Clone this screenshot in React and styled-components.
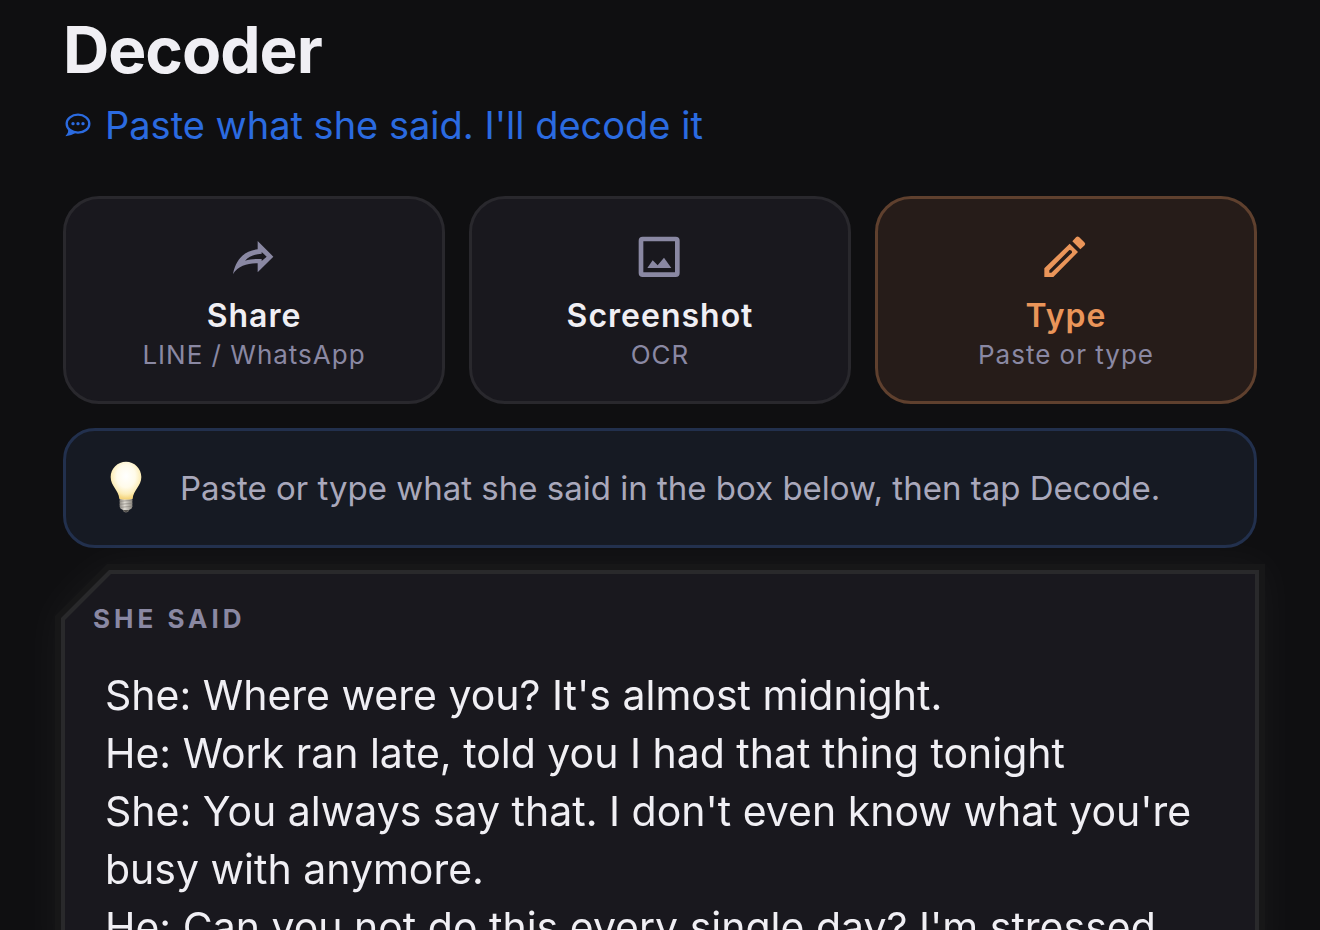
import { useState } from "react";
import styled, { createGlobalStyle } from "styled-components";

const MODES = [
  { id: "share", title: "Share", detail: "LINE / WhatsApp", Icon: ShareIcon },
  { id: "screenshot", title: "Screenshot", detail: "OCR", Icon: ImageIcon },
  { id: "type", title: "Type", detail: "Paste or type", Icon: PencilIcon },
];

const CONVERSATION = [
  "She: Where were you? It's almost midnight.",
  "He: Work ran late, told you I had that thing tonight",
  "She: You always say that. I don't even know what you're busy with anymore.",
  "He: Can you not do this every single day? I'm stressed",
].join("\n");

export default function App() {
  const [mode, setMode] = useState("type");
  const [message, setMessage] = useState(CONVERSATION);

  return (
    <>
      <GlobalStyle />
      <Page>
        <Title>Decoder</Title>
        <Subtitle>
          <ChatIcon />
          Paste what she said. I'll decode it
        </Subtitle>
        <ModeList>
          {MODES.map(({ id, title, detail, Icon }) => (
            <ModeButton
              key={id}
              type="button"
              $active={mode === id}
              aria-pressed={mode === id}
              onClick={() => setMode(id)}
            >
              <Icon />
              <ModeTitle>{title}</ModeTitle>
              <ModeDetail>{detail}</ModeDetail>
            </ModeButton>
          ))}
        </ModeList>
        <Hint>
          <BulbIcon />
          <HintText>
            Paste or type what she said in the box below, then tap Decode.
          </HintText>
        </Hint>
        <Glow>
          <Halo>
            <Frame>
              <Panel>
                <Label htmlFor="message">SHE SAID</Label>
                <Message
                  id="message"
                  spellCheck={false}
                  value={message}
                  onChange={(event) => setMessage(event.target.value)}
                />
              </Panel>
            </Frame>
          </Halo>
        </Glow>
      </Page>
    </>
  );
}

function ChatIcon() {
  return (
    <svg width="26" height="24" viewBox="0 0 78 72" aria-hidden="true">
      <ellipse
        cx="39"
        cy="32"
        rx="34"
        ry="27"
        fill="none"
        stroke="currentColor"
        strokeWidth="7"
      />
      <g fill="currentColor">
        <path d="M9 48Q12 59 2 68V70Q17 69 30 61L26 56Z" />
        <circle cx="24" cy="32" r="5" />
        <circle cx="39" cy="32" r="5" />
        <circle cx="54" cy="32" r="5" />
      </g>
    </svg>
  );
}

function ShareIcon() {
  return (
    <ModeIcon viewBox="3 0 144 144" aria-hidden="true">
      <path d="M12 123C21 76 48 54 86 49V24L133 71L86 118V91C55 91 28 99 12 123ZM48 83C63 79 78 77 98 78V84L113 71L98 57V62C78 63 60 69 48 83Z" />
    </ModeIcon>
  );
}

function ImageIcon() {
  return (
    <ModeIcon viewBox="2 0 144 144" aria-hidden="true">
      <path d="M22 11H121Q133 11 133 23V120Q133 132 121 132H22Q10 132 10 120V23Q10 11 22 11ZM24 25V118H119V25Z" />
      <path d="M36 105L52 82L67 97L86 74L108 105Z" />
    </ModeIcon>
  );
}

function PencilIcon() {
  return (
    <ModeIcon viewBox="0 0 144 144" aria-hidden="true">
      <path d="M7 106L83 32L108 57L34 132H7ZM22 112V119H28L90 59Q91 51 82 51Z" />
      <path d="M91 25L102 13Q106 8 111 12L127 28Q132 33 128 37L115 49Z" />
    </ModeIcon>
  );
}

function BulbIcon() {
  return (
    <Bulb viewBox="0 0 96 156" aria-hidden="true">
      <defs>
        <radialGradient id="bulb-glass" cx="50%" cy="38%" r="60%">
          <stop offset="0" stopColor="#ffffff" />
          <stop offset="0.5" stopColor="#fffbea" />
          <stop offset="0.8" stopColor="#fcedb8" />
          <stop offset="1" stopColor="#f5d57c" />
        </radialGradient>
        <linearGradient id="bulb-base" x1="0" x2="1" y1="0" y2="0">
          <stop offset="0" stopColor="#8f8b84" />
          <stop offset="0.4" stopColor="#dedad2" />
          <stop offset="1" stopColor="#8b877f" />
        </linearGradient>
      </defs>
      <path
        d="M29 110H67V137Q66 144 58 146Q55 154 48 154T38 146Q30 144 29 137Z"
        fill="url(#bulb-base)"
      />
      <path d="M38 147H58Q54 154 48 154T38 147Z" fill="#55534f" />
      <path
        d="M29 121L67 118M29 130L67 127M30 139L67 136"
        stroke="#88847d"
        strokeWidth="2"
      />
      <path
        d="M48 2C73 2 94 22 94 48C94 75 70 88 68 113Q48 118 28 113C26 88 2 75 2 48C2 22 23 2 48 2Z"
        fill="url(#bulb-glass)"
      />
    </Bulb>
  );
}

const GlobalStyle = createGlobalStyle`
  * {
    box-sizing: border-box;
  }
  body {
    margin: 0;
    background: #0f0f11;
    color: #f0eff4;
    font-family: Inter, "Liberation Sans", sans-serif;
  }
`;

const Page = styled.main`
  height: 100vh;
  padding: 12px 63px 0;
  display: flex;
  flex-direction: column;
  overflow: hidden;
`;

const Title = styled.h1`
  margin: 0;
  font-size: 64px;
  line-height: 76px;
  font-weight: 700;
  letter-spacing: -1px;
`;

const Subtitle = styled.p`
  margin: 14px 0 48px;
  padding-left: 2px;
  display: flex;
  align-items: center;
  gap: 14px;
  color: #2b6be0;
  font-size: 38px;
  line-height: 46px;
`;

const ModeList = styled.div`
  display: grid;
  grid-template-columns: repeat(3, 1fr);
  gap: 24px;
`;

const ModeDetail = styled.span`
  margin-top: 3px;
  color: #8a88a3;
  font-size: 26px;
  line-height: 32px;
  letter-spacing: 1px;
`;

const ModeTitle = styled.span`
  margin-top: 15px;
  font-size: 32px;
  line-height: 40px;
  font-weight: 600;
  letter-spacing: 1px;
`;

const ModeIcon = styled.svg`
  width: 48px;
  height: 48px;
  fill-rule: evenodd;
`;

const ModeButton = styled.button`
  padding: 34px 12px 30px;
  display: flex;
  flex-direction: column;
  align-items: center;
  border: 3px solid ${({ $active }) => ($active ? "#5f402e" : "#29282d")};
  border-radius: 36px;
  background: ${({ $active }) => ($active ? "#261c19" : "#19181e")};
  color: ${({ $active }) => ($active ? "#ea9559" : "#f0eff4")};
  font-family: inherit;
  cursor: pointer;

  ${ModeIcon} {
    fill: ${({ $active }) => ($active ? "#ea9559" : "#8a88a3")};
  }
`;

const Hint = styled.section`
  margin-top: 24px;
  padding: 30px 44px;
  display: flex;
  align-items: flex-start;
  gap: 38px;
  border: 3px solid #22304d;
  border-radius: 32px;
  background: #161a23;
`;

const Bulb = styled.svg`
  flex: none;
  width: 32px;
  height: 52px;
`;

const HintText = styled.p`
  margin: 0;
  color: #a9a8bb;
  font-size: 33px;
  line-height: 54px;
`;

const Glow = styled.section`
  flex: 1;
  min-height: 0;
  margin: 16px -8px -40px;
  display: flex;
  filter: drop-shadow(0 0 20px rgba(255, 255, 255, 0.04));
`;

/* Nested layers with the same cut top left corner */
const CutCorner = styled.div`
  flex: 1;
  min-width: 0;
  display: flex;
  clip-path: polygon(
    ${({ $cut }) => $cut}px 0,
    100% 0,
    100% 100%,
    0 100%,
    0 ${({ $cut }) => $cut}px
  );
`;

const Halo = styled(CutCorner).attrs({ $cut: 52 })`
  padding: 6px;
  background: #171718;
`;

const Frame = styled(CutCorner).attrs({ $cut: 48 })`
  padding: 4px;
  background: #29292b;
`;

const Panel = styled(CutCorner).attrs({ $cut: 46 })`
  padding: 29px 28px 0;
  flex-direction: column;
  background: #19181e;
`;

const Label = styled.label`
  color: #8a88a3;
  font-size: 26px;
  line-height: 32px;
  font-weight: 700;
  letter-spacing: 4px;
`;

const Message = styled.textarea`
  flex: 1;
  margin-top: 31px;
  padding: 0 12px;
  border: 0;
  outline: 0;
  resize: none;
  overflow: hidden;
  background: transparent;
  color: #f0eff4;
  font-family: inherit;
  font-size: 41px;
  line-height: 58px;
`;
